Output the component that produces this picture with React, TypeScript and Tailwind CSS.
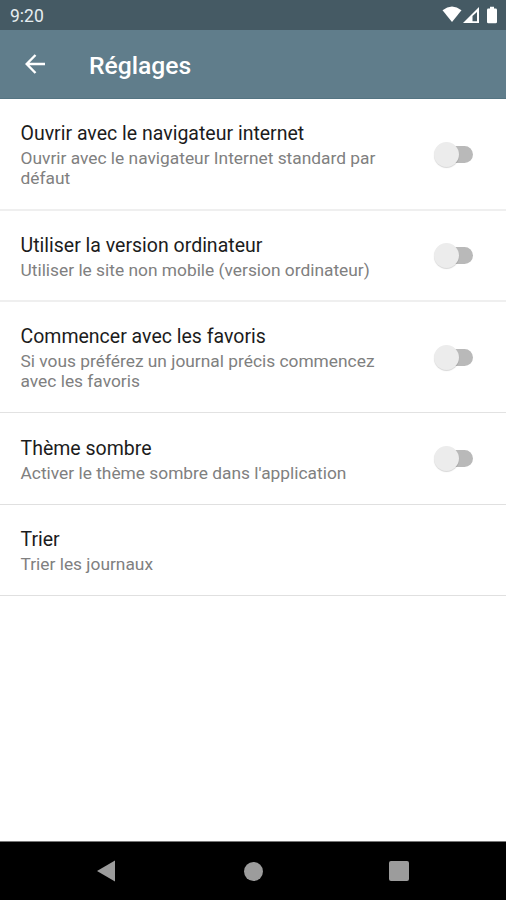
import React from 'react';

type Setting = {
  title: string;
  summary: string;
  hasSwitch?: boolean;
  rowClass: string;
};

const settings: Setting[] = [
  {
    title: 'Ouvrir avec le navigateur internet',
    summary: 'Ouvrir avec le navigateur Internet standard par défaut',
    hasSwitch: true,
    rowClass: 'h-[112px] border-b-2 border-[#efefef]',
  },
  {
    title: 'Utiliser la version ordinateur',
    summary: 'Utiliser le site non mobile (version ordinateur)',
    hasSwitch: true,
    rowClass: 'h-[91px] border-b-2 border-[#efefef]',
  },
  {
    title: 'Commencer avec les favoris',
    summary: 'Si vous préférez un journal précis commencez avec les favoris',
    hasSwitch: true,
    rowClass: 'h-[111px] border-b border-[#e2e2e2]',
  },
  {
    title: 'Thème sombre',
    summary: "Activer le thème sombre dans l'application",
    hasSwitch: true,
    rowClass: 'h-[92px] border-b border-[#e0e0e0]',
  },
  {
    title: 'Trier',
    summary: 'Trier les journaux',
    rowClass: 'h-[91px] border-b border-[#e0e0e0]',
  },
];

function StatusBar() {
  return (
    <div className="flex h-[30px] items-center justify-between bg-[#455a64] pr-2 pl-2.5 text-white">
      <span className="pt-1 text-[17.5px] leading-none text-[#e6edf0]">9:20</span>
      <svg width="56" height="18" viewBox="0 0 56 18" fill="currentColor" aria-hidden>
        <path d="M0.500 4.200Q10 -3 19.500 4.200L10 16Z" />
        <path d="M21 17L37 1V17ZM30.500 10V15.300H35V6Z" fillRule="evenodd" />
        <path d="M48 0.800h4v1.700h1.600q1.400 0 1.400 1.400v12q0 1.400-1.400 1.400h-7.200q-1.400 0-1.400-1.400V3.900q0-1.400 1.400-1.400h1.600z" />
      </svg>
    </div>
  );
}

function Toolbar() {
  return (
    <header className="flex h-[69px] items-center border-b border-[#547482] bg-[#607d8b] pl-[25px] text-white">
      <svg width="20" height="20" viewBox="0 0 20 20" fill="none" stroke="currentColor" strokeWidth="2.400" aria-hidden>
        <path d="M20 10H2.500M10.500 1L1.700 10L10.500 19" />
      </svg>
      <h1 className="mt-1 ml-11 text-[24.7px] leading-none font-medium">Réglages</h1>
    </header>
  );
}

function Switch() {
  return (
    <span role="switch" aria-checked="false" className="mr-[33px] flex h-[26px] w-[39px] shrink-0 items-center">
      <span className="z-10 h-[25px] w-[25px] shrink-0 rounded-full bg-[#ececec] shadow-[0_1px_1px_rgba(0,0,0,0.16)]" />
      <span className="-ml-[18px] h-[17px] w-8 shrink-0 rounded-full bg-[#b9b9b9]" />
    </span>
  );
}

function SettingRow({ title, summary, hasSwitch, rowClass }: Setting) {
  return (
    <li className={`flex items-center justify-between ${rowClass}`}>
      <div className="w-[385px] pl-[20.5px]">
        <p className="mt-px mb-px text-[19.5px] leading-[26px] text-[#1c1c1c]">{title}</p>
        <p className="text-[17.35px] leading-5 text-[#808080]">{summary}</p>
      </div>
      {hasSwitch && <Switch />}
    </li>
  );
}

function NavigationBar() {
  return (
    <nav className="flex h-[59px] items-center justify-between border-t border-[#777] bg-black pr-[97px] pl-[96px] text-[#9c9c9c]">
      <svg width="20" height="22" viewBox="0 0 20 22" fill="currentColor" aria-hidden>
        <path d="M1 11L19 0.500V21.500Z" />
      </svg>
      <span className="ml-0.5 h-[19px] w-[19px] rounded-full bg-[#9c9c9c]" />
      <span className="h-5 w-5 rounded-[2px] bg-[#9c9c9c]" />
    </nav>
  );
}

export default function App() {
  return (
    <div className="flex h-[900px] w-[506px] flex-col bg-white font-[Roboto,sans-serif]">
      <StatusBar />
      <Toolbar />
      <ul className="flex-1">
        {settings.map((setting) => (
          <SettingRow key={setting.title} {...setting} />
        ))}
      </ul>
      <NavigationBar />
    </div>
  );
}
